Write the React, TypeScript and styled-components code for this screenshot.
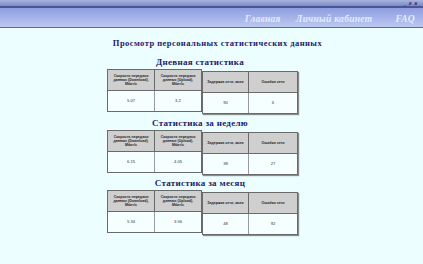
import React from "react";
import styled, { createGlobalStyle } from "styled-components";

const Global = createGlobalStyle`
  html, body { margin: 0; padding: 0; background: #ecfeff; }
  body { font-family: "Liberation Serif", serif; width: 423px; height: 264px; overflow: hidden; }
`;

const Page = styled.div`
  width: 423px;
  min-height: 264px;
  background: #ecfeff;
`;

const TopBar = styled.div`
  height: 6px;
  background: linear-gradient(#a9b4de, #7b88c6);
  border-bottom: 2px solid #4a5697;
  display: flex;
  justify-content: flex-end;
  align-items: flex-start;
  padding-right: 5px;
`;

const WinCtl = styled.span`
  font-family: "DejaVu Sans", sans-serif;
  font-size: 5px;
  line-height: 6px;
  font-weight: bold;
  font-style: italic;
  color: #2a3070;
  letter-spacing: 0.5px;
`;

const NavBar = styled.nav`
  height: 17px;
  background: linear-gradient(#8f9de0, #bcc8f0);
  border-bottom: 1px solid #5b67aa;
  display: flex;
  justify-content: flex-end;
  align-items: center;
  padding-right: 8px;
  padding-top: 2px;
  box-sizing: content-box;
`;

const NavLink = styled.a<{ $gap: number }>`
  margin-left: ${(p) => p.$gap}px;
  font-family: "Liberation Serif", serif;
  font-style: italic;
  font-weight: bold;
  font-size: 9.5px;
  letter-spacing: 0.3px;
  color: #e2ecff;
  text-decoration: none;
`;

const MainTitle = styled.h1`
  margin: 10px 0 0 0;
  padding-left: 12px;
  text-align: center;
  font-size: 8.5px;
  line-height: 10px;
  font-weight: bold;
  letter-spacing: 0.45px;
  color: #1c1c6a;
`;

const Content = styled.div`
  margin-left: 107px;
  width: 189px;
  display: flex;
  flex-direction: column;
`;

const SectionTitle = styled.h2`
  margin: 0;
  padding-right: 3px;
  text-align: center;
  font-size: 9px;
  line-height: 10px;
  font-weight: bold;
  letter-spacing: 0.3px;
  color: #1c1c6a;
`;

const Section = styled.section<{ $top: number }>`
  margin-top: ${(p) => p.$top}px;
  display: flex;
  flex-direction: column;
  gap: 2px;
`;

const Tables = styled.div`
  display: flex;
  align-items: flex-start;
`;

const Table = styled.div<{ $offset?: number; $shadow?: boolean }>`
  display: grid;
  grid-template-columns: repeat(2, auto);
  margin-top: ${(p) => p.$offset ?? 0}px;
  border: 1px solid #6a6a6a;
  box-shadow: ${(p) => (p.$shadow ? "1px 1px 1px #8a8a8a" : "none")};
  background: #f6ffff;
`;

const HeadCell = styled.div<{ $w: number }>`
  width: ${(p) => p.$w}px;
  height: 21px;
  box-sizing: border-box;
  background: #cfcfcf;
  border-right: 1px solid #6a6a6a;
  border-bottom: 1px solid #6a6a6a;
  &:nth-child(2) { border-right: none; }
  display: flex;
  flex-direction: column;
  align-items: center;
  justify-content: center;
  text-align: center;
  padding: 0 1px;
  font-family: "Liberation Sans", sans-serif;
  font-weight: bold;
  font-size: 3.6px;
  line-height: 4.3px;
  color: #262626;
  white-space: nowrap;
`;

const DataCell = styled.div<{ $w: number }>`
  width: ${(p) => p.$w}px;
  height: 20px;
  box-sizing: border-box;
  padding-bottom: 1px;
  border-right: 1px solid #9a9a9a;
  &:nth-child(4) { border-right: none; }
  display: flex;
  align-items: center;
  justify-content: center;
  font-family: "Liberation Sans", sans-serif;
  font-size: 4.2px;
  color: #333;
`;

const heads: string[][] = [
  ["Скорость передачи", "данных (Download),", "Мбит/с"],
  ["Скорость передачи", "данных (Upload),", "Мбит/с"],
  ["Задержка сети, мсек"],
  ["Ошибки сети"],
];

const sections = [
  { title: "Дневная статистика", values: ["5.07", "3.2", "90", "6"], top: 9 },
  { title: "Статистика за неделю", values: ["6.15", "4.05", "38", "27"], top: 4 },
  { title: "Статистика за месяц", values: ["5.34", "3.56", "48", "92"], top: 3 },
];

const Head = ({ w, lines }: { w: number; lines: string[] }) => (
  <HeadCell $w={w}>
    {lines.map((l) => (
      <span key={l}>{l}</span>
    ))}
  </HeadCell>
);

export default function App() {
  return (
    <Page>
      <Global />
      <TopBar>
        <WinCtl>_ ∂ x</WinCtl>
      </TopBar>
      <NavBar>
        <NavLink href="#" $gap={0}>Главная</NavLink>
        <NavLink href="#" $gap={15}>Личный кабинет</NavLink>
        <NavLink href="#" $gap={23}>FAQ</NavLink>
      </NavBar>
      <MainTitle>Просмотр персональных статистических данных</MainTitle>
      <Content>
        {sections.map((s) => (
          <Section key={s.title} $top={s.top}>
            <SectionTitle>{s.title}</SectionTitle>
            <Tables>
              <Table>
                <Head w={47} lines={heads[0]} />
                <Head w={46} lines={heads[1]} />
                <DataCell $w={47}>{s.values[0]}</DataCell>
                <DataCell $w={46}>{s.values[1]}</DataCell>
              </Table>
              <Table $offset={2} $shadow>
                <Head w={46} lines={heads[2]} />
                <Head w={48} lines={heads[3]} />
                <DataCell $w={46}>{s.values[2]}</DataCell>
                <DataCell $w={48}>{s.values[3]}</DataCell>
              </Table>
            </Tables>
          </Section>
        ))}
      </Content>
    </Page>
  );
}
